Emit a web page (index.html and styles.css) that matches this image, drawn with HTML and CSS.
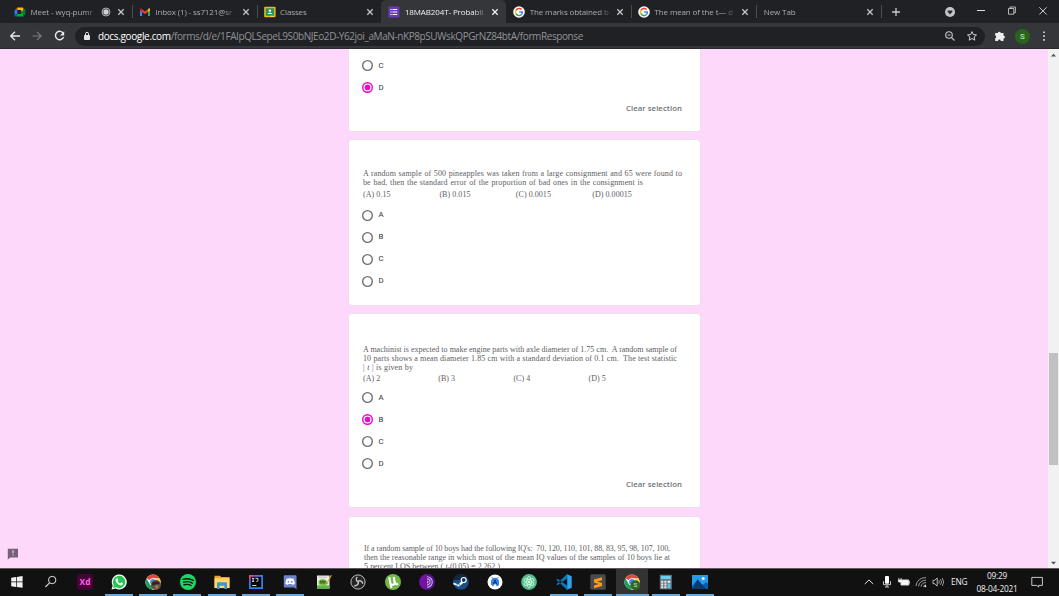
FILE: index.html
```html
<!DOCTYPE html>
<html lang="en">
<head>
<meta charset="utf-8">
<title>18MAB204T- Probability</title>
<link rel="stylesheet" href="styles.css">
</head>
<body>
<svg class="defs" aria-hidden="true">
  <symbol id="close" viewBox="0 0 8 8"><path d="M1.3 1.3l5.4 5.4M6.7 1.3L1.3 6.7" stroke="currentColor" stroke-width="1.3" fill="none"/></symbol>
  <symbol id="google" viewBox="0 0 12 12"><circle cx="6" cy="6" r="5.8" fill="#fff"/><g fill="none" stroke-width="1.5"><path d="M8.6 3.6A3.5 3.5 0 0 0 2.9 4.4" stroke="#ea4335"/><path d="M2.9 4.4a3.5 3.5 0 0 0 0 3.2" stroke="#fbbc05"/><path d="M2.9 7.6a3.5 3.5 0 0 0 5.4 1.1" stroke="#34a853"/><path d="M8.3 8.7A3.3 3.3 0 0 0 9.4 6.1H6.2" stroke="#4285f4"/></g></symbol>
  <symbol id="chrome" viewBox="0 0 16 16"><circle cx="8" cy="8" r="7.6" fill="#fff"/><path d="M8 8L1.4 4.2A7.6 7.6 0 0 1 14.7 4.4H8z" fill="#dd4b3e"/><path d="M1.4 4.2a7.6 7.6 0 0 0 5.7 11.4L10.8 10 8 8 4.6 9.8z" fill="#1fa05a"/><path d="M14.7 4.4A7.6 7.6 0 0 1 7.1 15.6L11.3 9.6 10 4.4z" fill="#fdd04e"/><circle cx="8" cy="8" r="3.7" fill="#fff"/><circle cx="8" cy="8" r="2.9" fill="#4688f1"/></symbol>
</svg>

<header class="browser">
  <div class="tabs">
    <div class="tab"><svg class="fav" viewBox="0 0 12 12"><path d="M3.4 1.4V4L.6 4.2z" fill="#ea4335"/><path d="M.6 4.2h2.7v3.7H.6z" fill="#2684fc"/><path d="M.6 7.9h2.7v2.7H1.4a.8.8 0 0 1-.8-.8z" fill="#0066da"/><path d="M3.4 1.4h5q1 0 1 1v2L7.2 6V4H3.4z" fill="#ffba00"/><path d="M3.3 7.9h3.9V6l2.2 1.7v2q0 .9-.9.9H3.3z" fill="#00ac47"/><path d="M7.2 6l3.2-2.8q.9-.5.9.4v5q0 .8-.9.3z" fill="#00832d"/></svg><span class="name short">Meet - wyq-pumr</span><svg class="rec" viewBox="0 0 10 10"><circle cx="5" cy="5" r="4" fill="none" stroke="#aeb1b5"/><circle cx="5" cy="5" r="2.7" fill="#d0d2d5"/></svg><svg class="x"><use href="#close"/></svg></div>
    <div class="tab"><svg class="fav" viewBox="0 0 12 12"><path d="M1 3v7h2V5.2z" fill="#4285f4"/><path d="M9 5.2V10h2V3z" fill="#34a853"/><path d="M9 3.2v2.7l2-1.5V3q-.4-1.4-2 .2z" fill="#fbbc04"/><path d="M3 3.2l3 2.3 3-2.3v2.7L6 8.1 3 5.9z" fill="#ea4335"/><path d="M1 3q.4-1.4 2 .2v2.7L1 4.4z" fill="#c5221f"/></svg><span class="name">Inbox (1) - ss7121@sr</span><svg class="x"><use href="#close"/></svg></div>
    <div class="tab"><svg class="fav" viewBox="0 0 12 12"><rect x=".2" y=".8" width="11.4" height="10.4" rx="1" fill="#f6b90b"/><rect x="1.7" y="2.2" width="8.4" height="7.6" fill="#26945c"/><circle cx="5.9" cy="4.6" r="1.2" fill="#fff"/><path d="M3.3 8Q5.9 5 8.5 8z" fill="#fff"/><path d="M6.5 9.8h2.7v.7H6.5z" fill="#eee"/></svg><span class="name">Classes</span><svg class="x"><use href="#close"/></svg></div>
    <div class="tab active"><svg class="fav" viewBox="0 0 12 12"><rect x=".4" y=".4" width="11" height="11" rx="1" fill="#673ab7"/><path d="M4.5 3.5h4.7M4.5 6h4.7M4.5 8.5h4.7M2.4 3.5h1.2M2.4 6h1.2M2.4 8.5h1.2" stroke="#fff" stroke-width="1.2"/></svg><span class="name">18MAB204T- Probabil</span><svg class="x"><use href="#close"/></svg></div>
    <div class="tab"><svg class="fav"><use href="#google"/></svg><span class="name">The marks obtained b</span><svg class="x"><use href="#close"/></svg></div>
    <div class="tab"><svg class="fav"><use href="#google"/></svg><span class="name">The mean of the t— d</span><svg class="x"><use href="#close"/></svg></div>
    <div class="tab noicon"><span class="name">New Tab</span><svg class="x"><use href="#close"/></svg></div>
    <svg class="plus" viewBox="0 0 10 10"><path d="M5 1v8M1 5h8" stroke="#c8cacd" stroke-width="1.3"/></svg>
    <div class="window-controls">
      <svg class="search-tabs" viewBox="0 0 12 12"><circle cx="6" cy="6" r="5" fill="#c3c6ca"/><path d="M3.6 4.4h4.8v1.4L6 8.6 3.6 5.8z" fill="#2b2d31"/></svg>
      <svg viewBox="0 0 12 12"><path d="M2 5.5h8" stroke="#ddd" stroke-width="1"/></svg>
      <svg viewBox="0 0 12 12"><path d="M2.5 3.5h5.3v5.7H2.5zM4 3.5V2h5.4v5.7H7.8" fill="none" stroke="#ddd" stroke-width=".8"/></svg>
      <svg viewBox="0 0 12 12"><path d="M2.4 2.3l7.2 7.2M9.6 2.3L2.4 9.5" stroke="#e3e3e3" stroke-width=".9"/></svg>
    </div>
  </div>
  <div class="toolbar">
    <svg class="nav" viewBox="0 0 12 12"><path d="M11 6H2M6 1.7L1.7 6 6 10.3" fill="none" stroke="#e8eaed" stroke-width="1.3"/></svg>
    <svg class="nav" viewBox="0 0 12 12"><path d="M1.5 6h8.7M6 1.9L10.1 6 6 10.1" fill="none" stroke="#7b7d80" stroke-width="1.1"/></svg>
    <svg class="nav" viewBox="0 0 12 12"><path d="M9.3 3.4A4.2 4.2 0 1 0 9.6 7" fill="none" stroke="#e8eaed" stroke-width="1.4"/><path d="M10.2 1.2v4.2H6z" fill="#e8eaed"/></svg>
    <div class="omnibox">
      <svg class="lock" viewBox="0 0 8 10"><rect x="1" y="3.9" width="6" height="5" rx=".7" fill="#e1e3e6"/><path d="M2.5 4.2V2.8a1.5 1.5 0 0 1 3 0v1.4" fill="none" stroke="#e1e3e6"/></svg>
      <span class="url"><b>docs.google.com</b><span class="path">/forms/d/e/1FAIpQLSepeL9S0bNJEo2D-Y62joi_aMaN-nKP8pSUWskQPGrNZ84btA/formResponse</span></span>
      <svg class="tool" viewBox="0 0 12 12"><circle cx="5" cy="5" r="3.3" fill="none" stroke="#c4c7ca" stroke-width="1.1"/><path d="M7.4 7.4l3.1 3.1M3.5 5h3" stroke="#c4c7ca" stroke-width="1.1"/></svg>
      <svg class="tool" viewBox="0 0 12 12"><path d="M6 1.6l1.3 3 3.2.3L8.1 7l.7 3.2L6 8.5l-2.8 1.7L3.9 7 1.5 4.9l3.2-.3z" fill="none" stroke="#cdd0d3"/></svg>
    </div>
    <svg class="puzzle" viewBox="0 0 12 12"><path d="M1.2 3.1h2.7a1.4 1.4 0 1 1 2.8 0h2.8v2.6a1.4 1.4 0 1 1 0 2.8V11H6.8a1.4 1.4 0 0 0-2.8 0H1.2V8.3a1.4 1.4 0 0 0 0-2.7z" fill="#eceef0"/></svg>
    <span class="avatar">S</span>
    <svg class="menu" viewBox="0 0 4 12"><path d="M1.2 1.4h1.7v1.7H1.2zM1.2 5.2h1.7v1.7H1.2zM1.2 9h1.7v1.7H1.2z" fill="#d4d6d9"/></svg>
  </div>
</header>

<main class="page">
  <section class="form">
    <article class="card c1">
      <label class="choice"><i></i>C</label>
      <label class="choice on"><i></i>D</label>
      <div class="clear">Clear selection</div>
    </article>
    <article class="card c2">
      <p class="q"><span>A random sample of 500 pineapples was taken from a large consignment and 65 were found to</span><span class="w280">be bad, then the standard error of the proportion of bad ones in the consignment is</span></p>
      <div class="opts"><span>(A) 0.15</span><span>(B) 0.015</span><span>(C) 0.0015</span><span>(D) 0.00015</span></div>
      <label class="choice"><i></i>A</label>
      <label class="choice"><i></i>B</label>
      <label class="choice"><i></i>C</label>
      <label class="choice"><i></i>D</label>
    </article>
    <article class="card c3">
      <p class="q"><span class="tight">A machinist is expected to make engine parts with axle diameter of 1.75 cm.&nbsp; A random sample of</span><span>10 parts shows a mean diameter 1.85 cm with a standard deviation of 0.1 cm.&nbsp; The test statistic</span><span class="w50">| <em>t</em> | is given by</span></p>
      <div class="opts"><span>(A) 2</span><span>(B) 3</span><span>(C) 4</span><span>(D) 5</span></div>
      <label class="choice"><i></i>A</label>
      <label class="choice on"><i></i>B</label>
      <label class="choice"><i></i>C</label>
      <label class="choice"><i></i>D</label>
      <div class="clear">Clear selection</div>
    </article>
    <article class="card c4">
      <p class="q"><span class="tighter">If a random sample of 10 boys had the following IQ's:&nbsp; 70, 120, 110, 101, 88, 83, 95, 98, 107, 100,</span><span class="tight">then the reasonable range in which most of the mean IQ values of the samples of 10 boys lie at</span><span class="w136 tighter">5 percent LOS between ( <em>t</em><sub>9</sub>(0.05) = 2.262 )</span></p>
    </article>
  </section>
  <svg class="report" viewBox="0 0 12 12"><path d="M1 .7h10v8.8H3.3L.8 11.6V.7z" fill="#77607a"/><path d="M6 2.3v2.9M6 6.4v1.2" stroke="#fcd7fa" stroke-width="1.1"/></svg>
  <div class="scroll"><svg viewBox="0 0 11 10"><path d="M3 6.5h5L5.5 3.7z" fill="#505050"/></svg><div class="thumb"></div><svg viewBox="0 0 11 10"><path d="M3 3.7h5L5.5 6.5z" fill="#505050"/></svg></div>
</main>

<footer class="taskbar">
  <div class="apps">
    <div><svg viewBox="0 0 16 16"><path d="M2.2 3.7l4.9-.7v4.6H2.2zM7.8 2.9l5.8-.8v5.5H7.8zM2.2 8.3h4.9v4.6l-4.9-.7zM7.8 8.3h5.8v5.5L7.8 13z" fill="#f2f2f2"/></svg></div>
    <div><svg viewBox="0 0 16 16"><circle cx="9.2" cy="6" r="3.7" fill="none" stroke="#ddd"/><path d="M6.5 8.8L2.4 13" stroke="#ddd" stroke-width="1.1"/></svg></div>
    <div><svg viewBox="0 0 16 16"><rect width="16" height="16" rx="2.4" fill="#470137"/><text x="8" y="11.2" text-anchor="middle" class="xd">Xd</text></svg></div>
    <div class="run"><svg viewBox="0 0 16 16"><path d="M.5 15.6l1.2-4A7.5 7.5 0 1 1 4.6 14.5z" fill="#fff"/><path d="M2 14.1l.8-2.9a6.2 6.2 0 1 1 2.1 2.1z" fill="#25c552"/><path d="M5.5 4.2l1.1 0 .8 2-.8.9q.9 1.7 2.5 2.3l1-1.1 2 1q-.1 2-2 2.1Q6 11 4.5 6.8 4.2 5.3 5.5 4.2z" fill="#fff"/></svg></div>
    <div class="run"><svg viewBox="0 0 16 16"><use href="#chrome"/><circle cx="11" cy="11" r="5" fill="#665044"/><path d="M7 9q3-3 6.7-.7l1.2 1.5-4.5.6-3 1z" fill="#292624"/><path d="M10.2 11.2l3 .3-.4 2.7-2 .5z" fill="#ad7d60"/></svg></div>
    <div class="run"><svg viewBox="0 0 16 16"><circle cx="8" cy="8" r="8" fill="#1ed760"/><path d="M3 5.4q5.5-1.6 10.3 1M3.6 8.1q4.6-1.3 8.8 1M4 10.7q3.9-1 7.2.8" fill="none" stroke="#111" stroke-width="1.4" stroke-linecap="round"/></svg></div>
    <div class="run"><svg viewBox="0 0 16 16"><path d="M.5 1.7h5.3l1.4 1.4h8.3v11H.5z" fill="#e6a52f"/><path d="M.5 4.2h15v9.9H.5z" fill="#ffd66b"/><path d="M3 15V9.2q0-1 1-1h8q1 0 1 1V15h-2.6v-3.3H5.6V15z" fill="#3b96d9"/></svg></div>
    <div class="run"><svg viewBox="0 0 16 16"><path d="M1 1h8L5 15H1z" fill="#e84a80"/><path d="M6 1h9v14H1V9z" fill="#317cf4"/><path d="M1 5l5-4h6L1 9z" fill="#8954d2"/><rect x="2.8" y="2.8" width="10.4" height="10.4" fill="#06060b"/><path d="M4 4.3h2.2M5.1 4.3v3M4 7.4h2.2M7.4 4.3h2.5v2.4q0 .8-1.6.7M4.2 11.5h4.2" fill="none" stroke="#eee" stroke-width=".9"/></svg></div>
    <div class="run"><svg viewBox="0 0 16 16"><path d="M2.8 1.2h10.7q1 0 1 1v13l-2.2-1.7H2.8q-1 0-1-1V2.2q0-1 1-1z" fill="#6f83cb"/><path d="M4.7 4.8q3.3-1.3 6.8 0 1.2 2.4 1.3 5-1.5 1.3-2.5 1l-.6-.8H6.5l-.6.8q-1 .3-2.5-1 .1-2.6 1.3-5z" fill="#fff"/><circle cx="6.4" cy="7.8" r=".9" fill="#6f83cb"/><circle cx="9.8" cy="7.8" r=".9" fill="#6f83cb"/></svg></div>
    <div><svg viewBox="0 0 16 16"><path d="M1 1.5h12.5v13H1z" fill="#eceeeb"/><path d="M1 11.3h12.5v3.4H1z" fill="#5fb544"/><path d="M2.5 7q3-3.4 7-1.2l3 3.6-4 2.4-5.8-1.2z" fill="#77c13b"/><path d="M4 7.2h5.3M4.4 7v2.2h1.8V7M7.3 7v2.2h1.8V7" fill="none" stroke="#36591f" stroke-width=".8"/><path d="M15 .8l.8.8-4 7.2-1 .8.1-1.3z" fill="#e7a51d"/><path d="M2.4 3.2h8.5" stroke="#bbb"/></svg></div>
    <div><svg viewBox="0 0 16 16"><circle cx="8" cy="8" r="7.1" fill="#252426" stroke="#bebebe"/><g fill="none" stroke="#c8c8c8" stroke-width="1.4"><path d="M7.3 2.9a3 3 0 0 0 1.5 5.2"/><path d="M12.7 9.7a3 3 0 0 0-4.6-2.5"/><path d="M4.3 11.5A3 3 0 0 0 8.2 7.8"/></g></svg></div>
    <div><svg viewBox="0 0 16 16"><circle cx="8" cy="8" r="8" fill="#71b84a"/><path d="M4.3 3.1l.9 5.5q.4 2.6 2.8 2.1 2-.4 1.6-2.7l-.9-5M9.8 8q.5 3 3.4 2M5.4 9l1 5" fill="none" stroke="#fff" stroke-width="2.1"/></svg></div>
    <div><svg viewBox="0 0 16 16"><circle cx="8" cy="8" r="7.9" fill="#7412a5"/><path d="M8 .1a7.9 7.9 0 0 1 0 15.8z" fill="#4e1384"/><path d="M8 2.7a5.3 5.3 0 0 1 0 10.6M8 4.9a3.1 3.1 0 0 1 0 6.2M8 7a1 1 0 0 1 0 2" fill="none" stroke="#dfaef6" stroke-width="1.1"/></svg></div>
    <div><svg viewBox="0 0 16 16"><circle cx="8" cy="8" r="7.8" fill="#174f85"/><path d="M.4 6A7.8 7.8 0 0 1 15.4 6z" fill="#122645"/><path d="M.3 8.4l5.1 2.1 3.1-3.2 1.7 1.8-3.5 2.8Q5.2 14 3.5 11.5L.5 10.4z" fill="#fff"/><circle cx="10.7" cy="6" r="2.5" fill="#17385f" stroke="#fff" stroke-width="1.2"/><circle cx="5.3" cy="11.2" r="1.5" fill="none" stroke="#275e8d" stroke-width=".6"/></svg></div>
    <div><svg viewBox="0 0 16 16"><circle cx="8" cy="8" r="7.5" fill="#fff"/><path d="M4 7q.5-3 4-3.2Q11.6 4 12 7v4l-2 1.5L8 9.8 6 12.5l-2-2z" fill="#3485e4"/><path d="M6.3 10.2L8 5.8l1.7 4.4M7 8.7h2" fill="none" stroke="#0c315d" stroke-width=".9"/><path d="M4.7 3l1 1.3M11.3 3l-1 1.3" stroke="#3485e4"/></svg></div>
    <div><svg viewBox="0 0 16 16"><circle cx="8" cy="8" r="7.9" fill="#52be8d"/><g fill="none" stroke="#d9ffe9" stroke-width=".8"><ellipse cx="8" cy="8" rx="2.2" ry="5.6"/><ellipse cx="8" cy="8" rx="2.2" ry="5.6" transform="rotate(60 8 8)"/><ellipse cx="8" cy="8" rx="2.2" ry="5.6" transform="rotate(120 8 8)"/></g><circle cx="8" cy="8" r="1" fill="#fff"/></svg></div>
    <div class="run"><svg viewBox="0 0 16 16"><path d="M1.5 4.7L.3 5.7l10.6 10 1-3.8zM1.5 11.3L.3 10.3 10.9.3l1 3.8z" fill="#0878bd"/><path d="M11 .2l4.7 2v11.6l-4.7 2z" fill="#2ca4ed"/><path d="M11 .2v15.6l1-2V2z" fill="#168bd2"/></svg></div>
    <div class="run"><svg viewBox="0 0 16 16"><rect x=".3" y=".3" width="15.4" height="15.4" rx="1.5" fill="#484a4b"/><path d="M12 3.2v3L7.2 7.5l4.8 1.6V12L4 14.2v-2.8L8.8 10 4 8.4V5.6z" fill="#ff9b17"/></svg></div>
    <div class="run current"><svg viewBox="0 0 16 16"><use href="#chrome"/><circle cx="11.4" cy="11.2" r="4.9" fill="#2e6723"/><text x="11.4" y="13.4" text-anchor="middle" class="badge">S</text></svg></div>
    <div class="run"><svg viewBox="0 0 16 16"><rect x="1.8" y=".8" width="12" height="14.5" fill="#69777e"/><path d="M3 2h9.6v3H3z" fill="#65d0f5"/><path d="M3.2 6.7h2v2h-2zM6.4 6.7h2v2h-2zM9.6 6.7h2.8v2H9.6zM3.2 9.5h2v2h-2zM6.4 9.5h2v2h-2zM3.2 12.2h2v2h-2zM6.4 12.2h2v2h-2z" fill="#e7edef"/><path d="M9.6 9.5h2.8v4.7H9.6z" fill="#52c3f1"/></svg></div>
    <div class="run"><svg viewBox="0 0 16 16"><path d="M0 1h16v14H0z" fill="#0a5ba8"/><path d="M0 1h16v8.5L14 8l-3.5 3L5.6 5.4 0 12.2z" fill="#249bea"/><path d="M0 15l5.6-9.5L14 15z" fill="#09396e"/><circle cx="11.2" cy="4.6" r="1.5" fill="#f2faff"/></svg></div>
  </div>
  <div class="tray">
    <svg viewBox="0 0 12 12"><path d="M1.8 8L6 3.9 10.2 8" fill="none" stroke="#e4e4e4"/></svg>
    <svg class="mic" viewBox="0 0 12 12"><rect x="4" y="0" width="4" height="7.7" rx="1" fill="#fff"/><path d="M2.5 5.2v3.5h7V5.2M6 8.7V11M4 11h4" fill="none" stroke="#ddd" stroke-width=".9"/></svg>
    <svg viewBox="0 0 12 12"><path d="M3 4h7.8v5H3z" fill="#f5f5f5" stroke="#ddd"/><path d="M.8 2v2M3 2v2M.3 4h3.2v2H.7zM11.5 5.5v2" fill="#fff" stroke="#eee" stroke-width=".8"/></svg>
    <svg viewBox="0 0 12 12"><g fill="none" stroke="#aaa" stroke-width=".9"><path d="M1 10A9 9 0 0 1 11 1.7M3.5 10.4A7 7 0 0 1 11 4.2M6 10.6a5 5 0 0 1 5-4M8.3 10.8A3 3 0 0 1 11 9"/></g><circle cx="10.3" cy="10.2" r="1" fill="#eee"/></svg>
    <svg class="speaker" viewBox="0 0 13 12"><path d="M1 4.3h1.7L5.2 2v8L2.7 7.7H1z" fill="none" stroke="#ddd" stroke-width=".8"/><path d="M6.8 4.3q1 1.7 0 3.4M8.5 3.2q2 2.8 0 5.6M10.3 2q2.7 4 0 8" fill="none" stroke="#bbb" stroke-width=".8"/></svg>
    <span class="lang">ENG</span>
    <span class="clock"><span>09:29</span><span class="date">08-04-2021</span></span>
    <svg class="notice" viewBox="0 0 12 12"><path d="M.8 1.4h10.6v8H7.6v1.8L5.8 9.4h-5z" fill="none" stroke="#ddd" stroke-width=".9"/></svg>
  </div>
</footer>
</body>
</html>
```

FILE: styles.css
```css
* { box-sizing: border-box; }
body {
  margin: 0;
  width: 1059px;
  height: 596px;
  overflow: hidden;
  display: flex;
  flex-direction: column;
  font-family: "Open Sans", "Noto Sans", sans-serif;
}
svg { display: block; flex: none; }
.defs { position: absolute; width: 0; height: 0; }

.browser { height: 49px; flex: none; background: #35363a; border-bottom: 1px solid #29292b; }
.tabs { height: 23px; background: #202124; display: flex; align-items: center; padding-left: 7px; }
.tab {
  width: 124.8px;
  height: 23px;
  padding: 0 7px;
  display: flex;
  align-items: center;
  position: relative;
  color: #a9adb2;
  font-size: 8px;
  letter-spacing: -.12px;
  flex: none;
}
.tab::after { content: ""; position: absolute; right: -1px; top: 5px; width: 1px; height: 13px; background: #4b4d51; }
.tab.active::after, .tab:nth-child(3)::after { display: none; }
.tab.active { background: #35363a; border-radius: 5px 5px 0 0; color: #eef0f2; }
.fav { width: 12px; height: 12px; margin-right: 4.5px; }
.name {
  width: 81px;
  white-space: nowrap;
  line-height: 14px;
  -webkit-mask-image: linear-gradient(90deg, #000 84%, rgba(0, 0, 0, .15));
  mask-image: linear-gradient(90deg, #000 84%, rgba(0, 0, 0, .15));
}
.name.short { width: 65px; }
.noicon { padding-left: 8px; }
.rec { width: 10px; height: 10px; margin-left: 5px; }
.x { width: 8px; height: 8px; margin-left: auto; color: #c3c5c8; }
.active .x { color: #eceef0; }
.plus { width: 10px; height: 10px; margin-left: 10.5px; }
.window-controls { display: flex; gap: 19px; margin-left: auto; padding: 0 10px 2px 0; }
.window-controls svg { width: 12px; height: 12px; }
.window-controls .search-tabs { margin-top: 1px; margin-bottom: -1px; }

.toolbar { height: 25px; display: flex; align-items: center; padding: 1px 0 0 9px; }
.nav { width: 12px; height: 12px; margin-right: 10.3px; }
.omnibox {
  width: 910px;
  height: 19px;
  border-radius: 10px;
  background: #202124;
  display: flex;
  align-items: center;
  padding: 0 7px 0 8px;
  margin-left: -1px;
}
.lock { width: 8px; height: 10px; margin-right: 7px; }
.url { flex: 1; font-size: 10px; line-height: 18px; color: #909398; white-space: nowrap; }
.url b { font-weight: 400; color: #fff; letter-spacing: -0.35px; }
.path { letter-spacing: -0.41px; }
.tool { width: 12px; height: 12px; margin-left: 10px; }
.puzzle { width: 12px; height: 12px; margin-left: 9px; }
.avatar {
  width: 15px;
  height: 15px;
  border-radius: 50%;
  background: #28651c;
  color: #dcebd9;
  font: 8px/15px Roboto, sans-serif;
  text-align: center;
  margin-left: 9px;
}
.menu { width: 4px; height: 12px; margin-left: 12.5px; }

.page { height: 519px; flex: none; overflow: hidden; background: #fdd8fa; position: relative; display: flex; justify-content: space-between; padding-left: 348px; }
.form { width: 353px; display: flex; flex-direction: column; }
.card {
  flex: none;
  background: #fff;
  border: 1px solid #ecdfed;
  border-radius: 4px;
  padding: 0 17px 0 14px;
  margin-bottom: 7px;
}
.c1 { height: 83px; border-top: 0; border-radius: 0 0 4px 4px; padding-top: 5.5px; }
.c2 { height: 167px; padding-top: 29px; }
.c3 { height: 195px; padding-top: 30.5px; margin-bottom: 8px; }
.c4 { height: 120px; padding-top: 27px; }
.choice { height: 22px; display: flex; align-items: center; margin-left: -1.5px; color: #303337; font: 7.8px/10px Roboto, sans-serif; }
.choice i { width: 11px; height: 11px; box-shadow: inset 0 0 0 1.35px #6b6f73; border-radius: 50%; margin-right: 6px; }
.choice.on i { background: radial-gradient(circle, #f500d8 2.6px, #fff 3.2px); box-shadow: inset 0 0 0 1.4px #f500d8; }
.clear { height: 19px; line-height: 19px; text-align: right; color: #6e7175; font-family: "Open Sans", sans-serif; font-weight: 600; font-size: 7.8px; letter-spacing: .05px; margin-right: 1px; }
.q { margin: 0; width: 319px; color: #606064; font: 8px/9px "Liberation Serif", serif; letter-spacing: .1px; }
.q span { display: block; white-space: nowrap; text-align-last: justify; }
.q .tight { letter-spacing: 0; }
.q .tighter { letter-spacing: -.1px; }
.q .w280 { width: 280px; }
.q .w50 { width: 50px; }
.q .w136 { width: 136px; }
.c3 .q { width: 314px; }
.c4 .q { width: 306px; margin-left: 1px; }
.q sub { font-size: 5px; line-height: 0; vertical-align: -1px; }
.opts { display: grid; grid-template-columns: repeat(4, 76.4px); margin: 3px 0 5px; color: #606064; font: 8px/9px "Liberation Serif", serif; letter-spacing: .05px; }
.c3 .opts { grid-template-columns: repeat(4, 75.2px); margin: 2px 0 4px; }
.report { position: absolute; left: 7px; top: 499px; width: 12px; height: 12px; }
.scroll { width: 11px; background: #f1f1f1; display: flex; flex-direction: column; padding-top: 1px; }
.scroll svg { width: 11px; height: 10px; }
.thumb { width: 9px; height: 112px; background: #c1c1c1; margin: 293px 1px auto; flex: none; }

.taskbar { height: 28px; flex: none; background: #111; border-top: 1px solid #5f565e; display: flex; justify-content: space-between; color: #eee; }
.apps { display: flex; margin-left: -.5px; }
.apps div { width: 34.2px; height: 27px; display: flex; align-items: center; justify-content: center; padding-bottom: 1px; position: relative; }
.apps svg { width: 16px; height: 16px; }
.run::after { content: ""; position: absolute; bottom: 0; left: 3px; width: 28px; height: 2px; background: #69a8d6; }
.apps .current { background: linear-gradient(90deg, transparent .7px, #333 .7px, #333 33.5px, transparent 33.5px); }
.current::after { left: 1px; width: 33px; }
.xd { font: 700 8.3px "Open Sans", sans-serif; fill: #ff61f6; }
.badge { font: 6.2px Roboto, sans-serif; fill: #dce8d8; }
.tray { display: flex; align-items: center; padding-right: 16px; }
.tray svg { width: 12px; height: 12px; margin: 0 5px 1px 0; }
.tray .mic { margin-left: 1px; }
.tray .speaker { width: 13px; margin-right: 6px; }
.lang { width: 18px; font-size: 8.3px; line-height: 12px; letter-spacing: -.2px; padding-bottom: 1px; }
.clock { width: 44px; margin-left: 6px; display: flex; flex-direction: column; text-align: center; font-size: 8.3px; line-height: 12.5px; letter-spacing: -.25px; white-space: nowrap; }
.tray .notice { margin: 0 0 2px 12px; }
```
